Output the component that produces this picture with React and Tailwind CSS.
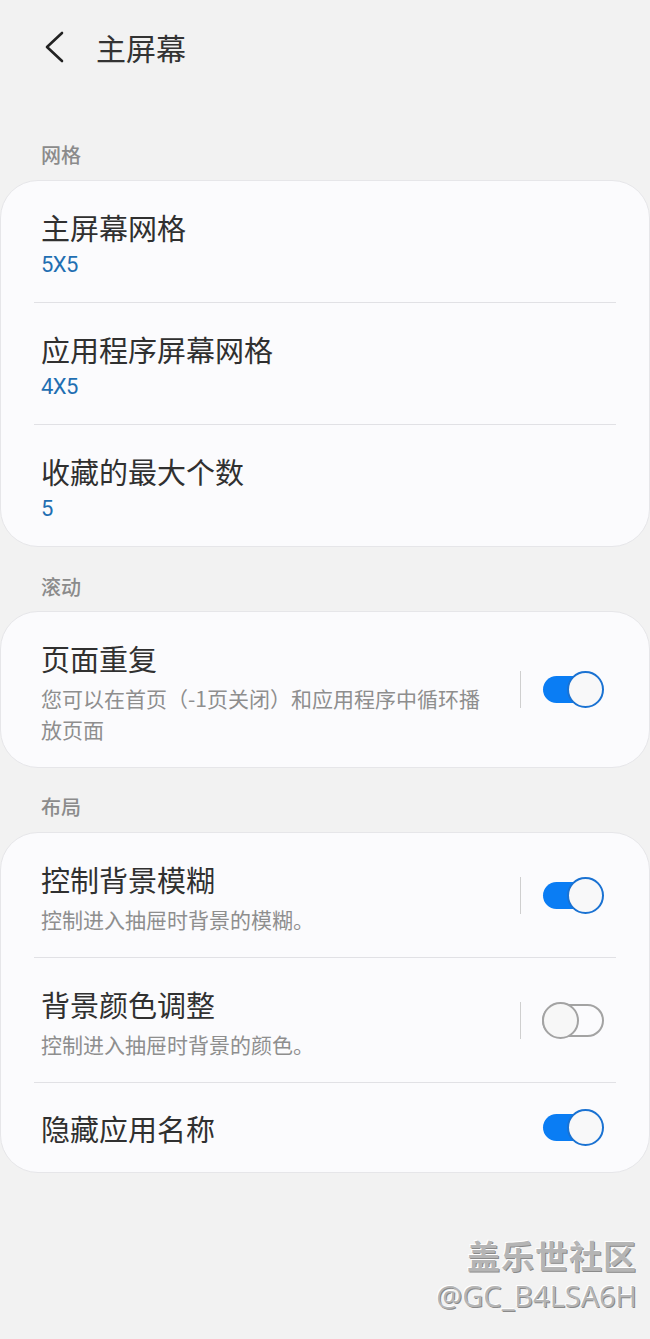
import React from "react";

const cjk = { fontFamily: '"Noto Sans CJK SC", "Noto Sans", sans-serif' };

function Toggle({ on }) {
  if (on) {
    return (
      <div className="relative w-[62px] h-[37px] flex items-center">
        <div className="ml-[1px] w-[56px] h-[27px] rounded-full bg-[#0a7df4]"></div>
        <div className="absolute right-0 top-0 w-[37px] h-[37px] rounded-full border-2 border-[#1a72d2] bg-[#f8f8f9]"></div>
      </div>
    );
  }
  return (
    <div className="relative w-[62px] h-[37px] flex items-center">
      <div className="w-[62px] h-[33px] rounded-full border-2 border-[#a3a3a3]"></div>
      <div className="absolute left-0 top-0 w-[37px] h-[37px] rounded-full border-2 border-[#a3a3a3] bg-[#f7f7f7]"></div>
    </div>
  );
}

function SectionLabel({ children, top = 25, bottom = 10 }) {
  return (
    <div
      className="px-[41px] text-[20px] leading-[28px] font-medium text-[#8b8b8b]"
      style={{ ...cjk, paddingTop: top, paddingBottom: bottom }}
    >
      {children}
    </div>
  );
}

function ValueRow({ title, value, last }) {
  return (
    <>
      <div className="h-[121px] px-[40px] pt-[28px]">
        <div className="text-[29px] leading-[36px] text-[#303030]" style={cjk}>
          {title}
        </div>
        <div
          className="mt-[7px] text-[22px] leading-[26px] text-[#1f6fb2] tracking-tight"
          style={{ fontFamily: 'Roboto, "Noto Sans", sans-serif' }}
        >
          {value}
        </div>
      </div>
      {!last && <div className="mx-[33px] h-px bg-[#e1e1e5]"></div>}
    </>
  );
}

function SwitchRow({ title, desc, on, divider, bar = true }) {
  return (
    <>
      <div className={"flex items-center pl-[40px] pr-[45px]" + (desc ? "" : " h-[89px]")}>
        <div className={"flex-1 min-w-0" + (desc ? " pt-[28px] pb-[22px]" : "")}>
          <div className="text-[29px] leading-[36px] text-[#303030]" style={cjk}>
            {title}
          </div>
          {desc && (
            <div
              className="mt-[7px] text-[21px] leading-[31px] text-[#8e8e8e] max-w-[450px]"
              style={cjk}
            >
              {desc}
            </div>
          )}
        </div>
        {bar && <div className="w-px h-[37px] bg-[#cfcfcf] mr-[21px]"></div>}
        <Toggle on={on} />
      </div>
      {divider && <div className="mx-[33px] h-px bg-[#e1e1e5]"></div>}
    </>
  );
}

export default function App() {
  return (
    <div className="w-[650px] min-h-[1339px] bg-[#f2f2f2] flex flex-col" style={cjk}>
      {/* header */}
      <div className="h-[98px] pb-[4px] flex items-center">
        <svg width="30" height="34" viewBox="0 0 30 34" className="ml-[39px]">
          <path d="M23 3 L8 17 L23 31" fill="none" stroke="#222" strokeWidth="2.6" strokeLinecap="round" strokeLinejoin="round" />
        </svg>
        <span className="ml-[27px] text-[30px] leading-[40px] text-[#333]">主屏幕</span>
      </div>

      <SectionLabel top={43} bottom={11}>网格</SectionLabel>
      <div className="rounded-[38px] bg-[#fbfbfd] border border-[#e6e6e9]">
        <ValueRow title="主屏幕网格" value="5X5" />
        <ValueRow title="应用程序屏幕网格" value="4X5" />
        <ValueRow title="收藏的最大个数" value="5" last />
      </div>

      <SectionLabel top={26} bottom={10}>滚动</SectionLabel>
      <div className="rounded-[38px] bg-[#fbfbfd] border border-[#e6e6e9]">
        <SwitchRow
          title="页面重复"
          desc="您可以在首页（-1页关闭）和应用程序中循环播放页面"
          on
        />
      </div>

      <SectionLabel top={25} bottom={11}>布局</SectionLabel>
      <div className="rounded-[38px] bg-[#fbfbfd] border border-[#e6e6e9]">
        <SwitchRow title="控制背景模糊" desc="控制进入抽屉时背景的模糊。" on divider />
        <SwitchRow title="背景颜色调整" desc="控制进入抽屉时背景的颜色。" on={false} divider />
        <SwitchRow title="隐藏应用名称" on bar={false} />
      </div>

      {/* watermark */}
      <div className="mt-[62px] pr-[13px] flex flex-col items-end text-[#b5b5b5]">
        <div
          className="text-[33px] leading-[40px] font-bold tracking-[1px]"
          style={{ ...cjk, textShadow: "-1px -1px 0 #fff, 1px 1px 0 #8a8a8a" }}
        >
          盖乐世社区
        </div>
        <div
          className="mt-[4px] text-[29px] leading-[34px]"
          style={{ fontFamily: '"Open Sans", "Noto Sans", sans-serif', textShadow: "-1px -1px 0 #fff, 1px 1px 0 #8a8a8a" }}
        >
          @GC_B4LSA6H
        </div>
      </div>
    </div>
  );
}
